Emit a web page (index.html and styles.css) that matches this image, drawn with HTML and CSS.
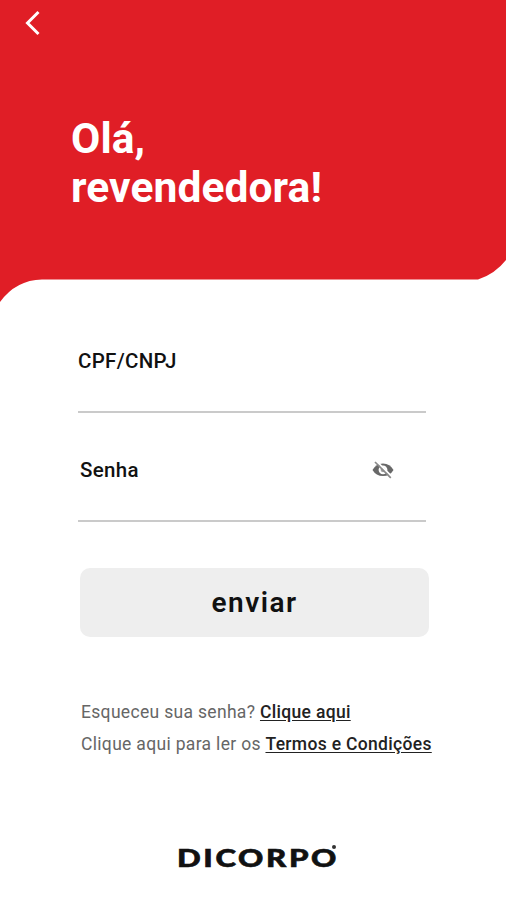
FILE: index.html
```
<!DOCTYPE html>
<html lang="pt-BR">
<head>
    <meta charset="UTF-8">
    <meta name="viewport" content="width=device-width, initial-scale=1.0">
    <title>Dicorpo</title>
    <link rel="stylesheet" href="styles.css">
</head>
<body>
    <header class="header">
        <svg class="header-shape" viewBox="0 0 506 302" preserveAspectRatio="none" aria-hidden="true">
            <path d="M0 0H506V260Q495 274 478 279.500H42Q16 280 0 302Z" fill="#e01e26"/>
        </svg>
        <button class="back" type="button" aria-label="Voltar">
            <svg width="16" height="26" viewBox="0 0 16 26">
                <path d="M14.500 2L3.500 13L14.500 24" fill="none" stroke="#fff" stroke-width="3"/>
            </svg>
        </button>
        <h1>Olá,<br>revendedora!</h1>
    </header>

    <main class="container">
        <form id="loginForm">
            <div class="field">
                <label for="documento">CPF/CNPJ</label>
                <input type="text" id="documento" name="documento">
            </div>
            <div class="field field-password">
                <div class="field-row">
                    <label for="senha">Senha</label>
                    <button class="toggle" type="button" aria-label="Mostrar senha">
                        <svg width="22" height="18" viewBox="0 0 22 18">
                            <path d="M0.500 9Q4 2.500 11 2.500T21.500 9Q18 15 11 15T0.500 9Z" fill="#686868"/>
                            <circle cx="11" cy="8.800" r="4.400" fill="#fff"/>
                            <circle cx="11" cy="8.800" r="2.400" fill="#a0a0a0"/>
                            <path d="M4.600 0.400L20.200 16" stroke="#fff" stroke-width="2"/>
                            <path d="M3 1L18.800 16.800" stroke="#8a8a8a" stroke-width="1.700"/>
                        </svg>
                    </button>
                </div>
                <input type="password" id="senha" name="senha">
            </div>
            <button class="submit" type="submit">enviar</button>
        </form>
        <div class="links">
            <p>Esqueceu sua senha? <a href="#">Clique aqui</a></p>
            <p>Clique aqui para ler os <a href="#">Termos e Condições</a></p>
        </div>
    </main>

    <footer class="footer">
        <svg width="164" height="30" viewBox="0 0 164 30" role="img" aria-label="Dicorpo">
            <text class="logo-text" x="1" y="24" textLength="162" lengthAdjust="spacingAndGlyphs">DICORPO</text>
            <circle cx="158" cy="4" r="2" fill="#333"/>
        </svg>
    </footer>
</body>
</html>
```

FILE: styles.css
```
* {
    box-sizing: border-box;
}
body {
    font-family: Roboto, sans-serif;
    background-color: #fff;
    color: #111;
    margin: 0;
    height: 900px;
    overflow: hidden;
}
button {
    font-family: inherit;
    border: none;
    padding: 0;
    background: none;
    cursor: pointer;
}
.header {
    position: relative;
    height: 302px;
    padding: 10px 0 0 24px;
}
.header-shape {
    position: absolute;
    top: 0;
    left: 0;
    width: 100%;
    height: 302px;
    z-index: -1;
}
.back {
    display: block;
    width: 16px;
    height: 26px;
}
.back svg {
    display: block;
}
h1 {
    margin: 78px 0 0 47px;
    color: #fff;
    font-size: 42.5px;
    line-height: 49px;
    font-weight: 700;
    letter-spacing: 0.1px;
}
.container {
    width: 350px;
    margin: 0 0 0 78px;
}
.field {
    width: 348px;
    height: 111px;
    padding-top: 46px;
}
.field-password {
    height: 109px;
    padding-top: 44px;
}
.field-row {
    display: flex;
    justify-content: space-between;
    align-items: center;
    height: 26px;
    padding: 0 32px 0 2px;
}
.field label {
    display: block;
    font-size: 20.5px;
    line-height: 26px;
    font-weight: 500;
    letter-spacing: 0.3px;
}
.field input {
    display: block;
    width: 100%;
    height: 39px;
    padding: 0;
    border: none;
    border-bottom: 2px solid #cacaca;
    background: none;
    font-size: 18px;
    outline: none;
}
.toggle svg {
    display: block;
}
.submit {
    display: block;
    width: 349px;
    height: 69px;
    margin: 46px 0 0 2px;
    border-radius: 10px;
    background-color: #eee;
    color: #111;
    font-size: 28px;
    font-weight: 600;
    letter-spacing: 1.5px;
}
.links {
    margin: 59px 0 0 3px;
    white-space: nowrap;
}
.links p {
    margin: 0;
    color: #666;
    font-size: 17.5px;
    line-height: 32px;
    letter-spacing: 0.32px;
}
.links a {
    color: #222;
    font-weight: 500;
    text-underline-offset: 2px;
}
.footer {
    display: flex;
    padding: 83px 0 0 176px;
}
.logo-text {
    font-family: Lato, sans-serif;
    font-size: 24px;
    font-weight: 900;
    letter-spacing: 2px;
    fill: #111;
    stroke: #111;
    stroke-width: 0.6px;
}
```
